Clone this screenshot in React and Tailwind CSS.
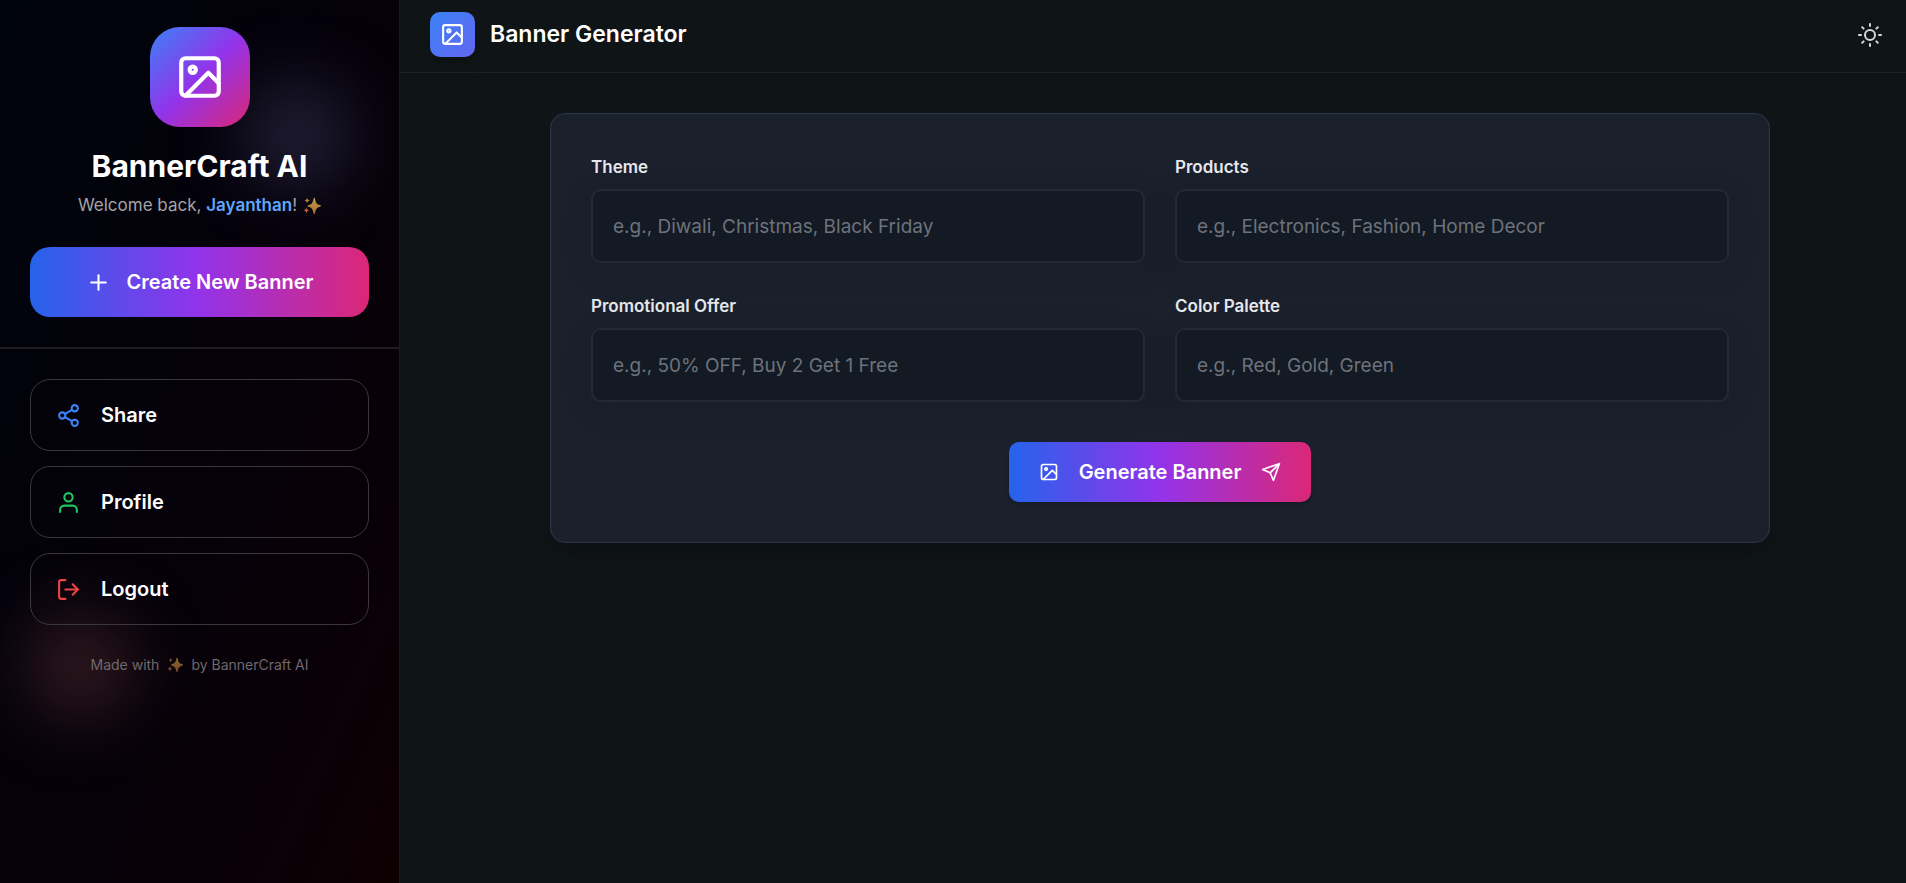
import { FiImage, FiPlus, FiShare2, FiUser, FiLogOut, FiSun, FiSend } from "react-icons/fi";

function Sparkles({ className }) {
  return (
    <svg viewBox="0 0 24 24" aria-hidden="true" className={className}>
      <defs>
        <linearGradient id="spark" x1="0" y1="0" x2="0" y2="1">
          <stop offset="0" stopColor="#f8d04e" />
          <stop offset="1" stopColor="#f08a4c" />
        </linearGradient>
      </defs>
      <path
        fill="url(#spark)"
        d="M15 1c.6 0 .9.500 1 1.200C17 8 18.500 9.700 22.800 10.600c.7.200 1.100.6 1.100 1.200s-.4 1-1.100 1.200C18.500 14 17 16 16 21.800c-.1.600-.4 1.100-1 1.100s-.9-.5-1-1.100C13 16 11.500 14 7.300 13c-.7-.2-1.100-.6-1.100-1.200s.4-1 1.100-1.200C11.500 9.700 13 8 14 2.200c.1-.7.4-1.200 1-1.200z"
      />
      <path fill="#f2a24e" d="M5.500 1c.5 2.300 1.200 3 3.500 3.600-2.300.6-3 1.400-3.500 3.600C5 6 4.300 5.200 2 4.600 4.300 4 5 3.300 5.500 1z" />
      <path fill="#f07a4e" d="M4.500 13.500c.6 2.600 1.300 3.500 4 4.200-2.700.7-3.400 1.600-4 4.200-.6-2.600-1.300-3.500-4-4.200 2.700-.7 3.400-1.600 4-4.200z" />
    </svg>
  );
}

const actions = [
  { label: "Share", Icon: FiShare2, color: "text-[#3b82f6]" },
  { label: "Profile", Icon: FiUser, color: "text-[#22c55e]" },
  { label: "Logout", Icon: FiLogOut, color: "text-[#ef4444]" },
];

const fields = [
  { id: "theme", label: "Theme", hint: "e.g., Diwali, Christmas, Black Friday" },
  { id: "products", label: "Products", hint: "e.g., Electronics, Fashion, Home Decor" },
  { id: "offer", label: "Promotional Offer", hint: "e.g., 50% OFF, Buy 2 Get 1 Free" },
  { id: "palette", label: "Color Palette", hint: "e.g., Red, Gold, Green" },
];

function Sidebar() {
  return (
    <aside className="relative w-[400px] shrink-0 overflow-hidden border-r border-[#1c1a1f] bg-linear-to-br/srgb from-[#00040d] via-[#05010a] to-[#0d0003]">
      <div className="absolute top-[80px] left-[242px] size-[110px] rounded-full bg-[#201d34] blur-[32px]" />
      <div className="absolute top-[611px] left-[25px] size-[110px] rounded-full bg-[#2d171e] blur-[32px]" />
      <div className="relative">
        <div className="flex flex-col items-center border-b-2 border-[#1e1b21] px-[30px] pt-[27px] pb-[30px]">
          <div className="flex size-[100px] items-center justify-center rounded-[30px] bg-linear-to-br/srgb from-[#3b82f6] via-[#9333ea] to-[#db2777]">
            <FiImage className="size-[50px] text-white" />
          </div>
          <h2 className="mt-5 text-3xl leading-[38px] font-bold text-white">BannerCraft AI</h2>
          <p className="mt-2 flex items-center text-[17px] leading-[25px] text-[#a5a4a8]">
            <span>
              Welcome back, <span className="font-semibold text-[#60a5fa]">Jayanthan</span>!
            </span>
            <Sparkles className="ml-[6px] size-[18px] opacity-75" />
          </p>
          <button className="mt-[29px] flex h-[70px] w-full items-center justify-center gap-4 rounded-[20px] bg-linear-to-r/srgb from-[#2563eb] via-[#9333ea] to-[#db2777] text-xl font-semibold text-white">
            <FiPlus className="size-[25px]" />
            Create New Banner
          </button>
        </div>
        <nav className="flex flex-col gap-[15px] px-[30px] pt-[30px]">
          {actions.map(({ label, Icon, color }) => (
            <button
              key={label}
              className="flex h-[72px] w-full items-center gap-5 rounded-[20px] border border-[#3a383d] px-[25px] text-xl font-semibold text-white"
            >
              <Icon className={`size-[25px] ${color}`} />
              {label}
            </button>
          ))}
        </nav>
        <p className="mt-[30px] flex items-center justify-center text-[14px] leading-5 text-[#6d696f]">
          Made with
          <Sparkles className="mx-2 size-4 opacity-50" />
          by BannerCraft AI
        </p>
      </div>
    </aside>
  );
}

export default function App() {
  return (
    <div className="flex min-h-screen bg-[#0f1417] font-['Inter',sans-serif]">
      <Sidebar />
      <div className="flex min-w-0 grow flex-col">
        <header className="flex h-[73px] items-center justify-between border-b border-[#1c2127] pr-[14px] pb-[3px] pl-[30px]">
          <div className="flex items-center gap-[15px]">
            <div className="flex size-[45px] items-center justify-center rounded-[10px] bg-linear-to-br/srgb from-[#3b82f6] to-[#6366f1] shadow-lg">
              <FiImage className="size-[25px] text-white" />
            </div>
            <h1 className="text-[23px] font-semibold text-white">Banner Generator</h1>
          </div>
          <button aria-label="Toggle theme" className="flex size-[45px] items-center justify-center text-[#d5d7db]">
            <FiSun className="size-6" />
          </button>
        </header>
        <main className="grow pt-10 pr-[30px] pl-[44px]">
          <form className="mx-auto max-w-[1220px] rounded-[15px] border border-[#2d3748] bg-[#1a202c] p-10 shadow-xl">
            <div className="grid grid-cols-2 gap-[30px]">
              {fields.map(({ id, label, hint }) => (
                <div key={id}>
                  <label htmlFor={id} className="mb-[9px] block text-[17px] leading-[26px] font-semibold text-[#e5e7eb]">
                    {label}
                  </label>
                  <input
                    id={id}
                    type="text"
                    placeholder={hint}
                    className="block h-[74px] w-full rounded-[10px] border-2 border-[#232935] bg-[#131a23] px-5 text-[19px] text-white shadow-[0_8px_32px_rgba(30,20,30,0.2)] outline-none placeholder:text-[#6d727c]"
                  />
                </div>
              ))}
            </div>
            <div className="mt-10 flex justify-center">
              <button
                type="button"
                className="flex h-[60px] items-center gap-5 rounded-[10px] bg-linear-to-r/srgb from-[#2563eb] via-[#9333ea] to-[#db2777] px-[30px] text-xl font-semibold text-white shadow-md"
              >
                <FiImage className="size-5" />
                Generate Banner
                <FiSend className="size-5" />
              </button>
            </div>
          </form>
        </main>
      </div>
    </div>
  );
}
